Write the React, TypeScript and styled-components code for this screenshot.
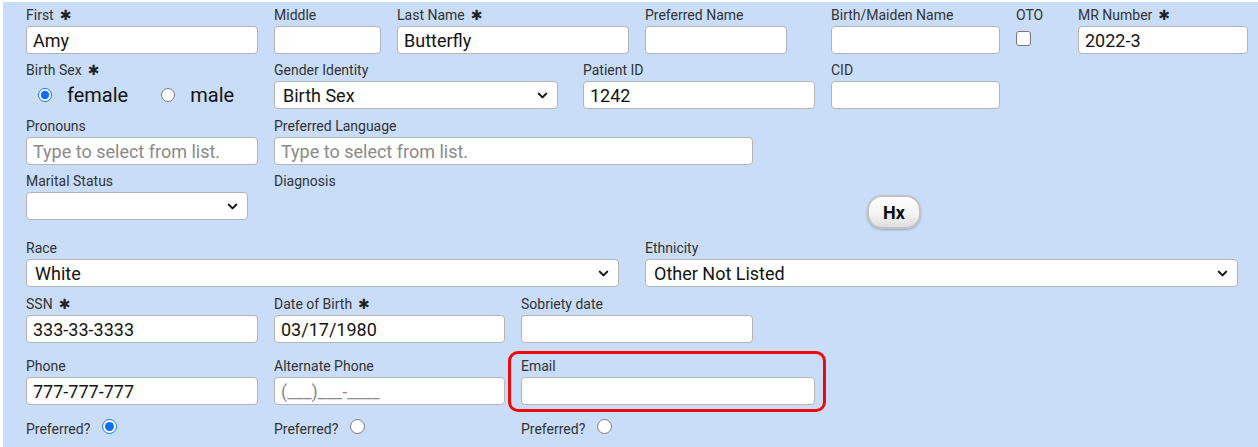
import React from "react";
import styled, { createGlobalStyle } from "styled-components";
import { ChevronDown } from "lucide-react";

const GlobalStyle = createGlobalStyle`
  body {
    margin: 0;
    background: #ffffff;
    font-family: Roboto, "Liberation Sans", sans-serif;
  }
`;

const Panel = styled.div`
  margin: 2px 0 0 3px;
  height: 445px;
  box-sizing: border-box;
  background-color: #c9ddf9;
  padding: 4px 0 0 23px;
`;

const Row = styled.div<{ $mb?: number }>`
  display: flex;
  align-items: flex-start;
  margin-bottom: ${(p) => (p.$mb ?? 8)}px;
`;

const Field = styled.div<{ $w?: number; $ring?: boolean }>`
  position: relative;
  flex: none;
  width: ${(p) => (p.$w ? `${p.$w}px` : "auto")};

  ${(p) =>
    p.$ring &&
    `
    &::after {
      content: "";
      position: absolute;
      left: -13px;
      top: -6px;
      width: 318px;
      height: 61px;
      border: 3px solid #ee0a0a;
      border-radius: 10px;
      box-sizing: border-box;
      pointer-events: none;
    }
  `}
`;

const Label = styled.div`
  font-size: 14px;
  line-height: 18px;
  height: 18px;
  color: #333333;
  margin-bottom: 2px;
  white-space: nowrap;
`;

const Star = styled.span`
  margin-left: 6px;
  font-size: 14px;
  color: #222;
  font-family: "DejaVu Sans", sans-serif;
`;

const TextInput = styled.input<{ $w?: number }>`
  display: block;
  box-sizing: border-box;
  width: ${(p) => (p.$w ? `${p.$w}px` : "100%")};
  height: 28px;
  padding: 0 6px;
  border: 1px solid #b4b4b4;
  border-radius: 4px;
  background: #ffffff;
  font-family: Roboto, "Liberation Sans", sans-serif;
  font-size: 18px;
  color: #141414;
  outline: none;

  &::placeholder {
    color: #8a8a8a;
  }
`;

const SelectWrap = styled.div<{ $w?: number }>`
  position: relative;
  width: ${(p) => (p.$w ? `${p.$w}px` : "100%")};

  svg {
    position: absolute;
    right: 8px;
    top: 7px;
    pointer-events: none;
    color: #111;
  }
`;

const Select = styled.select`
  appearance: none;
  display: block;
  box-sizing: border-box;
  width: 100%;
  height: 28px;
  padding: 0 30px 0 8px;
  border: 1px solid #b4b4b4;
  border-radius: 4px;
  background: #ffffff;
  font-family: Roboto, "Liberation Sans", sans-serif;
  font-size: 18px;
  color: #141414;
  outline: none;
`;

const Check = styled.input`
  appearance: none;
  display: block;
  width: 15px;
  height: 15px;
  margin: 7px 0 0 0;
  border: 1px solid #767676;
  border-radius: 3px;
  background: #ffffff;
`;

const RadioGroup = styled.div`
  display: flex;
  align-items: center;
  height: 28px;
  padding-left: 12px;
  gap: 33px;
`;

const RadioOption = styled.label`
  display: flex;
  align-items: center;
  gap: 15px;
  font-size: 20px;
  color: #141414;
`;

const Radio = styled.input<{ $size?: number }>`
  margin: 0;
  width: ${(p) => p.$size ?? 14}px;
  height: ${(p) => p.$size ?? 14}px;
  accent-color: #0b6ff2;
`;

const Preferred = styled.label`
  display: flex;
  align-items: center;
  gap: 12px;
  font-size: 14px;
  color: #333333;

  input {
    position: relative;
    top: -3px;
  }
`;

const HxButton = styled.button`
  margin-top: 23px;
  width: 54px;
  height: 34px;
  border: 2px solid #c2c2c2;
  border-radius: 15px;
  background: linear-gradient(#ffffff 0%, #f4f4f4 55%, #dedede 100%);
  box-shadow: 0 1px 2px rgba(0, 0, 0, 0.25);
  font-family: Roboto, "Liberation Sans", sans-serif;
  font-weight: 700;
  font-size: 18px;
  color: #111111;
  cursor: pointer;
`;

const Req = () => <Star>✱</Star>;

const Dropdown: React.FC<{ w?: number; value: string }> = ({ w, value }) => (
  <SelectWrap $w={w}>
    <Select defaultValue={value}>
      <option value={value}>{value}</option>
    </Select>
    <ChevronDown size={15} strokeWidth={3.2} />
  </SelectWrap>
);

export default function App() {
  return (
    <>
      <GlobalStyle />
      <Panel>
        <Row $mb={7}>
          <Field $w={248}>
            <Label>
              First<Req />
            </Label>
            <TextInput $w={232} defaultValue="Amy" />
          </Field>
          <Field $w={123}>
            <Label>Middle</Label>
            <TextInput $w={107} />
          </Field>
          <Field $w={248}>
            <Label>
              Last Name<Req />
            </Label>
            <TextInput $w={232} defaultValue="Butterfly" />
          </Field>
          <Field $w={186}>
            <Label>Preferred Name</Label>
            <TextInput $w={142} />
          </Field>
          <Field $w={185}>
            <Label>Birth/Maiden Name</Label>
            <TextInput $w={169} />
          </Field>
          <Field $w={62}>
            <Label>OTO</Label>
            <Check type="checkbox" />
          </Field>
          <Field $w={170}>
            <Label>
              MR Number<Req />
            </Label>
            <TextInput defaultValue="2022-3" />
          </Field>
        </Row>

        <Row>
          <Field $w={248}>
            <Label>
              Birth Sex<Req />
            </Label>
            <RadioGroup>
              <RadioOption>
                <Radio type="radio" name="sex" defaultChecked />
                female
              </RadioOption>
              <RadioOption>
                <Radio type="radio" name="sex" />
                male
              </RadioOption>
            </RadioGroup>
          </Field>
          <Field $w={309}>
            <Label>Gender Identity</Label>
            <Dropdown w={284} value="Birth Sex" />
          </Field>
          <Field $w={248}>
            <Label>Patient ID</Label>
            <TextInput $w={232} defaultValue="1242" />
          </Field>
          <Field $w={169}>
            <Label>CID</Label>
            <TextInput />
          </Field>
        </Row>

        <Row $mb={7}>
          <Field $w={248}>
            <Label>Pronouns</Label>
            <TextInput $w={232} placeholder="Type to select from list." />
          </Field>
          <Field $w={479}>
            <Label>Preferred Language</Label>
            <TextInput placeholder="Type to select from list." />
          </Field>
        </Row>

        <Row $mb={10}>
          <Field $w={248}>
            <Label>Marital Status</Label>
            <Dropdown w={222} value="" />
          </Field>
          <Field $w={593}>
            <Label>Diagnosis</Label>
          </Field>
          <Field>
            <HxButton type="button">Hx</HxButton>
          </Field>
        </Row>

        <Row $mb={8}>
          <Field $w={619}>
            <Label>Race</Label>
            <Dropdown w={593} value="White" />
          </Field>
          <Field $w={593}>
            <Label>Ethnicity</Label>
            <Dropdown value="Other Not Listed" />
          </Field>
        </Row>

        <Row $mb={14}>
          <Field $w={248}>
            <Label>
              SSN<Req />
            </Label>
            <TextInput $w={232} defaultValue="333-33-3333" />
          </Field>
          <Field $w={247}>
            <Label>
              Date of Birth<Req />
            </Label>
            <TextInput $w={231} defaultValue="03/17/1980" />
          </Field>
          <Field $w={232}>
            <Label>Sobriety date</Label>
            <TextInput />
          </Field>
        </Row>

        <Row $mb={16}>
          <Field $w={248}>
            <Label>Phone</Label>
            <TextInput $w={232} defaultValue="777-777-777" />
          </Field>
          <Field $w={247}>
            <Label>Alternate Phone</Label>
            <TextInput $w={231} placeholder="(___)___-____" />
          </Field>
          <Field $w={294} $ring>
            <Label>Email</Label>
            <TextInput />
          </Field>
        </Row>

        <Row>
          <Field $w={248}>
            <Preferred>
              Preferred?
              <Radio type="radio" name="pref1" $size={15} defaultChecked />
            </Preferred>
          </Field>
          <Field $w={247}>
            <Preferred>
              Preferred?
              <Radio type="radio" name="pref2" $size={15} />
            </Preferred>
          </Field>
          <Field>
            <Preferred>
              Preferred?
              <Radio type="radio" name="pref3" $size={15} />
            </Preferred>
          </Field>
        </Row>
      </Panel>
    </>
  );
}
